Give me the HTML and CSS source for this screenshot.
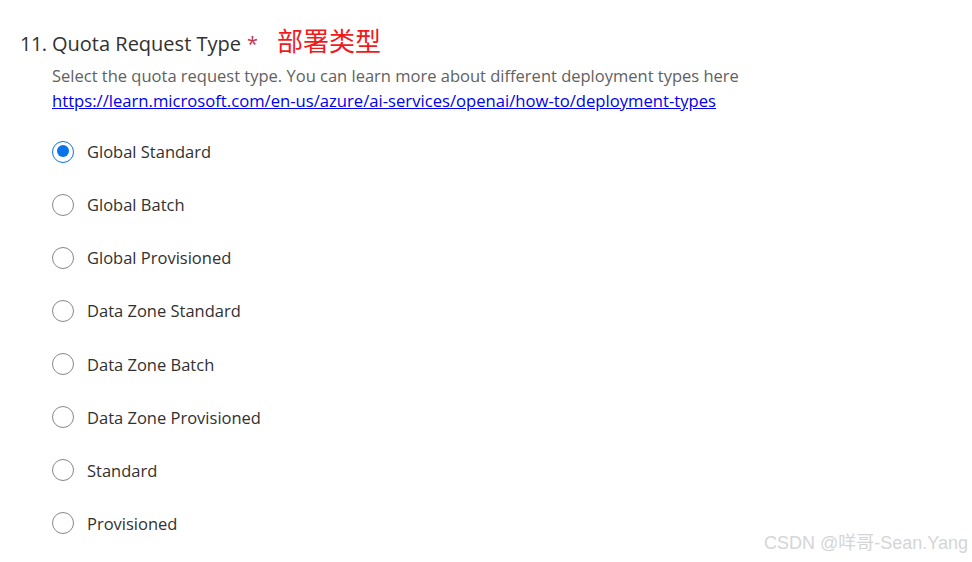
FILE: index.html
```html
<!DOCTYPE html>
<html>
<head>
<meta charset="utf-8">
<link rel="stylesheet" href="styles.css">
</head>
<body>
<div class="question">
  <div class="title-row">
    <span class="num">11.</span>
    <span class="title">Quota Request Type</span>
    <span class="req">*</span>
    <span class="note">部署类型</span>
  </div>
  <div class="desc">
    <div>Select the quota request type. You can learn more about different deployment types here</div>
    <a href="#" class="link">https://learn.microsoft.com/en-us/azure/ai-services/openai/how-to/deployment-types</a>
  </div>
  <div class="options">
    <label class="opt"><span class="radio checked"></span><span class="lbl">Global Standard</span></label>
    <label class="opt"><span class="radio"></span><span class="lbl">Global Batch</span></label>
    <label class="opt"><span class="radio"></span><span class="lbl">Global Provisioned</span></label>
    <label class="opt"><span class="radio"></span><span class="lbl">Data Zone Standard</span></label>
    <label class="opt"><span class="radio"></span><span class="lbl">Data Zone Batch</span></label>
    <label class="opt"><span class="radio"></span><span class="lbl">Data Zone Provisioned</span></label>
    <label class="opt"><span class="radio"></span><span class="lbl">Standard</span></label>
    <label class="opt"><span class="radio"></span><span class="lbl">Provisioned</span></label>
  </div>
</div>
<div class="watermark">CSDN @咩哥-Sean.Yang</div>
</body>
</html>
```
FILE: styles.css
```css
html, body {
  margin: 0;
  padding: 0;
  background: #fff;
}
body {
  font-family: "Open Sans", "Noto Sans CJK SC", sans-serif;
  color: #323130;
  width: 972px;
  height: 562px;
  overflow: hidden;
  position: relative;
}
.question {
  padding: 21px 0 0 20px;
}
.title-row {
  display: flex;
  align-items: baseline;
  height: 32px;
  font-size: 20px;
}
.num {
  width: 32px;
  color: #323130;
  letter-spacing: -0.5px;
}
.title {
  color: #323130;
}
.req {
  color: #c4314b;
  margin-left: 6px;
}
.note {
  color: #f01a1a;
  font-family: "Noto Sans CJK SC", sans-serif;
  font-size: 26px;
  margin-left: 19px;
}
.desc {
  padding-left: 32px;
  font-size: 16.5px;
  line-height: 25px;
  color: #616161;
  margin-top: 10px;
}
.link {
  color: #0000ee;
  text-decoration: underline;
  font-size: 16.65px;
}
.options {
  display: flex;
  flex-direction: column;
  padding-left: 32px;
  margin-top: 12px;
}
.opt {
  display: flex;
  align-items: center;
  height: 53.14px;
  font-size: 16.5px;
  color: #323130;
}
.radio {
  box-sizing: border-box;
  width: 22px;
  height: 22px;
  border: 1.5px solid #8a8886;
  border-radius: 50%;
  margin-right: 13px;
  position: relative;
}
.radio.checked {
  border-color: #0a74e8;
}
.radio.checked::after {
  content: "";
  position: absolute;
  left: 3.5px;
  top: 3.5px;
  width: 12px;
  height: 12px;
  border-radius: 50%;
  background: #0a74e8;
}
.watermark {
  position: absolute;
  right: 4px;
  bottom: 8px;
  font-size: 18px;
  color: #d5d5d5;
  font-family: "Liberation Sans", "Noto Sans CJK SC", sans-serif;
}
```
